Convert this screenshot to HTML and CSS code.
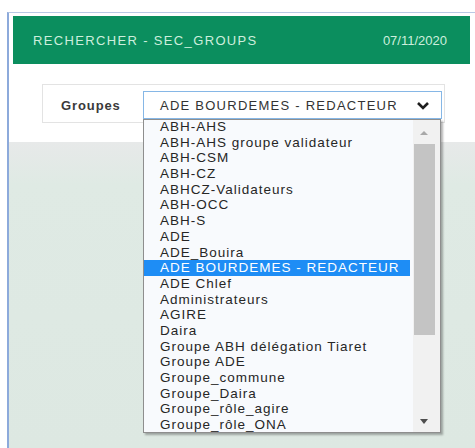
FILE: index.html
```html
<!DOCTYPE html>
<html lang="fr">
<head>
<meta charset="utf-8">
<title>Rechercher - SEC_GROUPS</title>
<link rel="stylesheet" href="styles.css">
</head>
<body>
<div class="page">
  <div class="panel">
    <div class="top">
      <header class="bar">
        <span class="title">RECHERCHER - SEC_GROUPS</span>
        <span class="date">07/11/2020</span>
      </header>
      <div class="search">
        <div class="card">
          <label class="label">Groupes</label>
          <div class="picker">
            <div class="select">
              <span class="value">ADE BOURDEMES - REDACTEUR</span>
              <svg class="chev" width="14" height="9" viewBox="0 0 14 9" aria-hidden="true">
                <path d="M2 2 L7 7 L12 2" fill="none" stroke="#1e1e1e" stroke-width="2.6" stroke-linejoin="miter"/>
              </svg>
            </div>
            <div class="listbox">
              <ul class="options">
                <li>ABH-AHS</li>
                <li>ABH-AHS groupe validateur</li>
                <li>ABH-CSM</li>
                <li>ABH-CZ</li>
                <li>ABHCZ-Validateurs</li>
                <li>ABH-OCC</li>
                <li>ABH-S</li>
                <li>ADE</li>
                <li>ADE_Bouira</li>
                <li class="sel">ADE BOURDEMES - REDACTEUR</li>
                <li>ADE Chlef</li>
                <li>Administrateurs</li>
                <li>AGIRE</li>
                <li>Daira</li>
                <li>Groupe ABH délégation Tiaret</li>
                <li>Groupe ADE</li>
                <li>Groupe_commune</li>
                <li>Groupe_Daira</li>
                <li>Groupe_rôle_agire</li>
                <li>Groupe_rôle_ONA</li>
              </ul>
              <div class="scroll">
                <span class="arrow up"></span>
                <div class="thumb"></div>
                <span class="arrow down"></span>
              </div>
            </div>
          </div>
        </div>
      </div>
    </div>
    <div class="content"></div>
  </div>
</div>
</body>
</html>
```
FILE: styles.css
```css
html, body {
  margin: 0;
  height: 100%;
}

body {
  background: #fff;
  font-family: "Liberation Sans", Arial, sans-serif;
  overflow: hidden;
}

.page {
  height: 448px;
  padding: 12px 0 0 7px;
  box-sizing: border-box;
}

.panel {
  height: 100%;
  display: flex;
  flex-direction: column;
  border-left: 2px solid #8daadb;
  border-top: 1px solid #b9c9e5;
  box-sizing: border-box;
}

.top {
  padding: 3px 5px 0 4px;
  background: #fff;
}

/* green title bar */
.bar {
  height: 48px;
  display: flex;
  align-items: center;
  justify-content: space-between;
  padding: 0 23px 0 20px;
  background: #0b8e5e;
  color: #cdeedd;
  font-size: 13px;
}

.title {
  letter-spacing: 1.35px;
}

/* search criteria */
.search {
  padding: 20px 25px 19px 29px;
}

.card {
  display: flex;
  align-items: center;
  border: 1px solid #e3e3e3;
  padding: 6px 2px 3px 18px;
}

.label {
  width: 82px;
  flex: none;
  font-weight: bold;
  font-size: 13px;
  letter-spacing: 0.9px;
  color: #3a3a3a;
}

.picker {
  position: relative;
  flex: 1;
}

.select {
  height: 28px;
  box-sizing: border-box;
  display: flex;
  align-items: center;
  padding: 0 11px 0 16px;
  border: 1px solid #86b7e6;
  background: #fff;
}

.value {
  flex: 1;
  font-size: 13px;
  letter-spacing: 1.25px;
  color: #333;
  white-space: nowrap;
}

.chev {
  flex: none;
}

/* open dropdown */
.listbox {
  position: absolute;
  top: 100%;
  left: 0;
  width: 298px;
  height: 314px;
  box-sizing: border-box;
  display: flex;
  overflow: hidden;
  border: 1px solid #8e8e8e;
  background: #f8fafd;
  box-shadow: 2px 2px 2px rgba(0, 0, 0, 0.3);
}

.options {
  flex: 1;
  min-width: 0;
  margin: -1px 0 0;
  padding: 0;
  list-style: none;
}

.options li {
  height: 15.7px;
  line-height: 15.7px;
  margin-right: 3px;
  padding-left: 16px;
  font-size: 13.5px;
  letter-spacing: 1px;
  color: #262626;
  white-space: nowrap;
}

.options li.sel {
  background: #1e8df5;
  color: #fff;
}

.scroll {
  width: 27px;
  flex: none;
  display: flex;
  flex-direction: column;
  align-items: flex-start;
  padding: 11px 0 8px;
  box-sizing: border-box;
  background: #f1f1f1;
}

.thumb {
  width: 21px;
  height: 191px;
  margin: 9px 0 0 1px;
  background: #c4c4c4;
}

.arrow {
  width: 0;
  height: 0;
  margin-left: 7px;
  border-left: 4.5px solid transparent;
  border-right: 4.5px solid transparent;
}

.arrow.up {
  border-bottom: 4px solid #a8a8a8;
}

.arrow.down {
  margin-top: auto;
  border-top: 5px solid #4e4e4e;
}

/* results area */
.content {
  flex: 1;
  background: linear-gradient(#e7e9e9, #dfeae4 14%, #dde8e2);
}
```
